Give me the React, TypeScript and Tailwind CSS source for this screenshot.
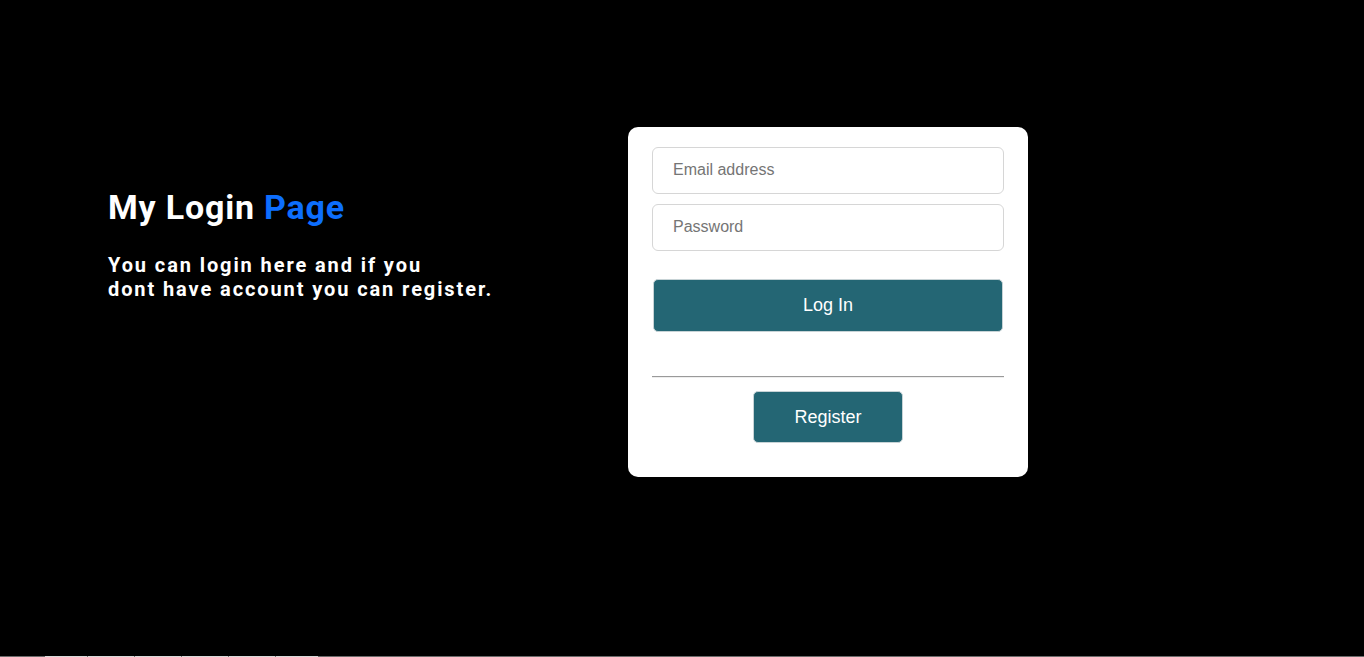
import React from "react";

export default function App() {
  return (
    <div className="flex h-[657px] w-full flex-col overflow-hidden bg-black">
      <main className="flex flex-1 items-start">
        <section className="w-[628px] pl-[108px] pt-[185px] font-['Roboto',sans-serif] text-white">
          <h1 className="text-[34px] font-bold leading-[44px] tracking-[0.8px]">
            My Login <span className="text-[#0d6efd]">Page</span>
          </h1>
          <p className="mt-[24px] text-[20px] font-bold leading-[24px] tracking-[1.9px]">
            You can login here and if you
            <br />
            dont have account you can register.
          </p>
        </section>

        <div className="mt-[127px] w-[400px] rounded-[10px] bg-white px-6 pb-[34px] pt-5 font-['Liberation_Sans',Arial,sans-serif]">
          <form className="flex flex-col">
            <input
              type="email"
              placeholder="Email address"
              className="h-[47px] w-full rounded-[6px] border border-[#d6d6d6] px-5 pb-px text-[16px] text-black outline-none placeholder:text-[#757575]"
            />
            <input
              type="password"
              placeholder="Password"
              className="mt-[10px] h-[47px] w-full rounded-[6px] border border-[#d6d6d6] px-5 pb-px text-[16px] text-black outline-none placeholder:text-[#757575]"
            />
            <button
              type="button"
              className="mx-px mt-[28px] h-[53px] rounded-[5px] border border-[#c7d3d6] bg-[#246674] text-[18px] text-white"
            >
              Log In
            </button>
            <div className="mt-[44px] h-[2px] border-t border-b border-t-[#9a9a9a] border-b-[#eeeeee]" />
            <button
              type="button"
              className="mx-auto mt-[13px] h-[52px] w-[150px] rounded-[5px] border border-[#c7d3d6] bg-[#246674] text-[18px] text-white"
            >
              Register
            </button>
          </form>
        </div>
      </main>

      <div className="flex h-px w-full">
        <div className="w-[45px] bg-[#6b6b6b]" />
        <div className="flex w-[273px] justify-between bg-[#d9d9d9] px-[42px]">
          <span className="w-px bg-[#777]" />
          <span className="w-px bg-[#777]" />
          <span className="w-px bg-[#777]" />
          <span className="w-px bg-[#777]" />
          <span className="w-px bg-[#777]" />
        </div>
        <div className="flex-1 bg-[#6b6b6b]" />
      </div>
    </div>
  );
}
